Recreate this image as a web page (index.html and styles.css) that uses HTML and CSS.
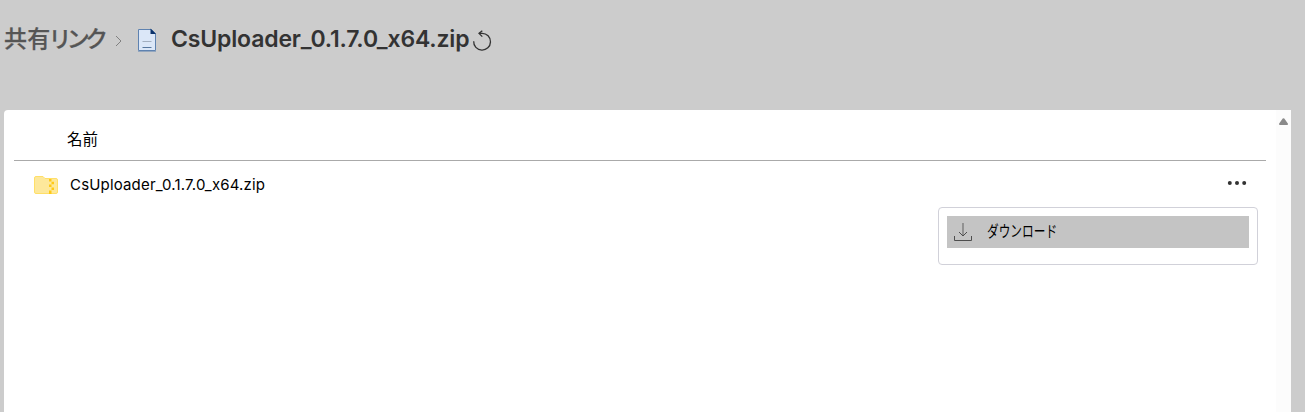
FILE: index.html
```
<!DOCTYPE html>
<html lang="ja">
<head>
    <meta charset="UTF-8">
    <meta name="viewport" content="width=device-width, initial-scale=1.0">
    <title>共有リンク</title>
    <link rel="stylesheet" href="styles.css">
</head>
<body>
    <header class="breadcrumb">
        <a class="crumb">共有<span class="kana">リンク</span></a>
        <svg class="chevron" width="8" height="12" viewBox="0 0 8 12" fill="none" stroke="#808080">
            <path d="M1 1l5 5-5 5"/>
        </svg>
        <svg class="file-icon" width="20" height="26" viewBox="0 0 20 26">
            <path d="M1.5 2.5h13l4 4v17h-17z" fill="#dbe7f8" stroke="#5e82b0"/>
            <path d="M1 24.5h18" stroke="#93a6be"/>
            <path d="M13.5 1.5l5.5 5.5h-5.5z" fill="#0b326b"/>
            <path d="M5.5 14.5h9" stroke="#a3afbf"/>
            <path d="M5.5 20.5h9" stroke="#58789f"/>
        </svg>
        <h1>CsUploader_0.1.7.0_x64.zip</h1>
        <svg class="refresh" width="20" height="22" viewBox="0 0 20 22" fill="none" stroke="#333" stroke-width="1.3">
            <path d="M1.7 11.2a8.4 8.4 0 1 0 8.4-7.9H7"/>
            <path d="M10.3.8L7 3.4l3.3 3.2"/>
        </svg>
    </header>

    <main class="panel">
        <div class="list">
            <div class="list-head">名前</div>
            <div class="row">
                <svg class="folder" width="24" height="18" viewBox="0 0 24 18">
                    <path d="M.5 2Q.5.5 2 .5h7l2 2h11q1.5 0 1.5 1.5v12q0 1.5-1.5 1.5H2Q.5 17.5.5 16z" fill="#fde89b" stroke="#ffdf68"/>
                    <path d="M15 3h2.5v2.5H15zM17.5 5.8H20v2.5h-2.5zM15 8.5h2.5V11H15zM17.5 11.4H20v2.5h-2.5zM15 14.5h2.5V18H15z" fill="#ffc917"/>
                </svg>
                <span class="file-name">CsUploader_0.1.7.0_x64.zip</span>
                <svg class="more" width="20" height="6" viewBox="0 0 20 6" fill="#333">
                    <circle cx="2.8" cy="3" r="2"/>
                    <circle cx="10" cy="3" r="2"/>
                    <circle cx="17.2" cy="3" r="2"/>
                </svg>
                <div class="menu">
                    <div class="menu-item">
                        <svg width="20" height="20" viewBox="0 0 20 20" fill="none">
                            <path d="M10 1v13" stroke="#777" stroke-width="1.3"/>
                            <path d="M6 10l4 4 4-4M1.5 14v4.5h17V14" stroke="#4d4d4d"/>
                        </svg>
                        <span>ダウンロード</span>
                    </div>
                </div>
            </div>
        </div>
        <div class="scrollbar">
            <svg width="10" height="8" viewBox="0 0 10 8"><path d="M4.5 1.2L8 6H1z" fill="#8a8a8a" stroke="#8a8a8a" stroke-width="2" stroke-linejoin="round"/></svg>
        </div>
    </main>
</body>
</html>
```
FILE: styles.css
```
* {
    box-sizing: border-box;
}

body {
    margin: 0;
    height: 100vh;
    overflow: hidden;
    display: flex;
    flex-direction: column;
    background-color: #ccc;
    color: #000;
    font-family: Inter, "Noto Sans CJK JP", sans-serif;
    font-size: 16px;
}

.breadcrumb {
    display: flex;
    align-items: flex-start;
    height: 110px;
    padding: 22px 0 0 4px;
}

.crumb {
    width: 102px;
    font-family: "Noto Sans CJK JP", sans-serif;
    font-size: 23px;
    font-weight: 500;
    line-height: 30px;
    letter-spacing: 0.3px;
    white-space: nowrap;
    color: #555;
    -webkit-text-stroke: 0.25px #555;
}

.kana {
    margin-left: -2px;
    letter-spacing: -4.8px;
}

.chevron {
    margin: 13px 0 0 9px;
}

.file-icon {
    margin: 5px 0 0 14px;
}

h1 {
    width: 300px;
    margin: 0 0 0 14px;
    font-size: 23px;
    font-weight: 600;
    line-height: 34px;
    letter-spacing: -0.16px;
    white-space: nowrap;
    color: #333;
}

.refresh {
    margin: 8px 0 0 1px;
}

.panel {
    flex: 1;
    display: flex;
    margin: 0 14px 0 4px;
    background-color: #fff;
    border-radius: 4px 0 0 0;
}

.list {
    flex: 1;
    padding: 0 10px;
}

.list-head {
    height: 51px;
    padding: 16px 0 0 53px;
    border-bottom: 1px solid #aaa;
    font-family: "Noto Sans CJK JP", sans-serif;
    font-size: 15.5px;
    line-height: 24px;
}

.row {
    position: relative;
    display: flex;
    align-items: center;
    height: 48px;
    padding: 0 19px 0 20px;
}

.file-name {
    margin: 0 0 2px 12px;
    font-size: 15px;
    letter-spacing: 0.17px;
}

.more {
    margin: 0 0 5px auto;
}

.menu {
    position: absolute;
    top: 46px;
    right: 8px;
    width: 320px;
    height: 58px;
    padding: 8px;
    background-color: #fff;
    border: 1px solid #d1d1d9;
    border-radius: 4px;
}

.menu-item {
    display: flex;
    align-items: center;
    height: 32px;
    padding-left: 6px;
    background-color: #c4c4c4;
}

.menu-item span {
    margin: 0 0 5px 14px;
    font-family: "Noto Sans CJK JP", sans-serif;
    transform: scaleX(0.73);
    transform-origin: left;
}

.scrollbar {
    width: 15px;
    padding: 8px 0 0 3px;
    background-color: #fcfcfc;
}

.scrollbar svg {
    display: block;
}
```
